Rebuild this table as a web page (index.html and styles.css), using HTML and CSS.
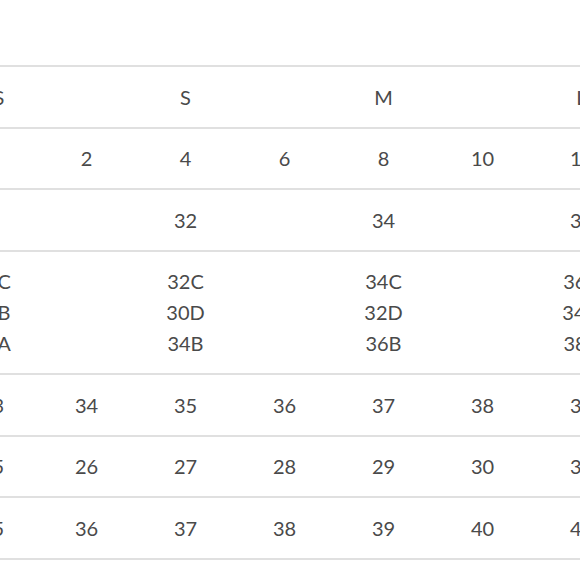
FILE: index.html
```html
<!DOCTYPE html>
<html>
<head>
<meta charset="utf-8">
<link rel="stylesheet" href="styles.css">
</head>
<body>
<div class="chart">
<table class="size-table">
  <colgroup>
    <col class="col-first">
    <col class="col"><col class="col"><col class="col">
    <col class="col"><col class="col"><col class="col">
  </colgroup>
  <tbody>
    <tr><td>XS</td><td></td><td>S</td><td></td><td>M</td><td></td><td>L</td></tr>
    <tr><td>0</td><td>2</td><td>4</td><td>6</td><td>8</td><td>10</td><td>12</td></tr>
    <tr><td></td><td></td><td>32</td><td></td><td>34</td><td></td><td>36</td></tr>
    <tr><td>30C<br>32B<br>34A</td><td></td><td>32C<br>30D<br>34B</td><td></td><td>34C<br>32D<br>36B</td><td></td><td>36C<br>34D<br>38B</td></tr>
    <tr><td>33</td><td>34</td><td>35</td><td>36</td><td>37</td><td>38</td><td>39</td></tr>
    <tr><td>25</td><td>26</td><td>27</td><td>28</td><td>29</td><td>30</td><td>31</td></tr>
    <tr><td>35</td><td>36</td><td>37</td><td>38</td><td>39</td><td>40</td><td>41</td></tr>
  </tbody>
</table>
</div>
</body>
</html>
```

FILE: styles.css
```css
html, body {
  margin: 0;
  padding: 0;
  background: #ffffff;
  overflow: hidden;
}

.chart {
  padding-top: 65px;
  margin-left: -52px;
}

.size-table {
  border-collapse: collapse;
  table-layout: fixed;
  width: 683px;
  font-family: Lato, "Liberation Sans", sans-serif;
  font-size: 20px;
  color: #4a4a4a;
  border-top: 2px solid #e0e0e0;
}

.col-first {
  width: 89px;
}

.col {
  width: 99px;
}

.size-table td {
  padding: 14.5px 0 14px;
  line-height: 31px;
  text-align: center;
  vertical-align: middle;
  border-bottom: 2px solid #e0e0e0;
  white-space: nowrap;
}
```
